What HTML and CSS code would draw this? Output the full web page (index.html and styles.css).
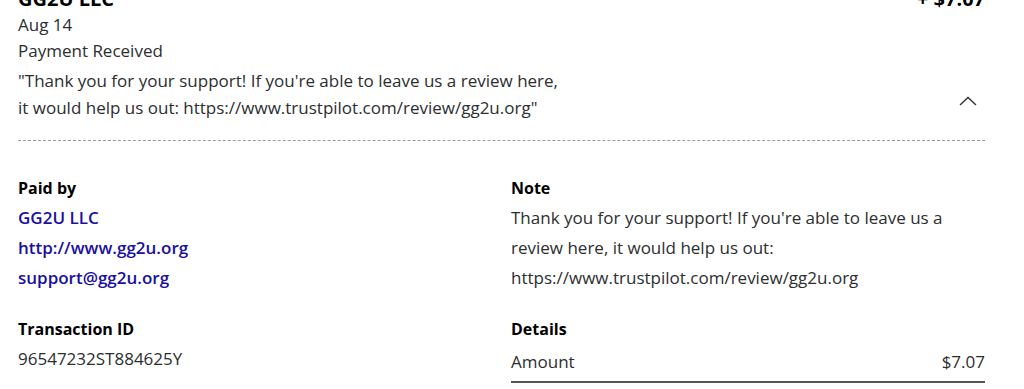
FILE: index.html
```html
<!DOCTYPE html>
<html lang="en">
<head>
    <meta charset="UTF-8">
    <meta name="viewport" content="width=device-width, initial-scale=1.0">
    <title>Activity details</title>
    <link rel="stylesheet" href="styles.css">
</head>
<body>
    <div class="activity">
        <div class="summary">
            <div class="summary-info">
                <div class="merchant">GG2U LLC</div>
                <div class="line">Aug 14</div>
                <div class="line">Payment Received</div>
                <div class="quote">"Thank you for your support! If you're able to leave us a review here, it would help us out: https://www.trustpilot.com/review/gg2u.org"</div>
            </div>
            <div class="summary-side">
                <div class="total">+ $7.07</div>
                <svg class="chevron" width="18" height="10" viewBox="0 0 18 10">
                    <path d="M1 9 L9 1.5 L17 9" fill="none" stroke="#2c2e2f" stroke-width="1.3"/>
                </svg>
            </div>
        </div>

        <div class="details">
            <div class="block">
                <h3>Paid by</h3>
                <a href="#">GG2U LLC</a>
                <a href="#">http://www.gg2u.org</a>
                <a href="#">support@gg2u.org</a>
            </div>
            <div class="block">
                <h3>Note</h3>
                <p>Thank you for your support! If you're able to leave us a review here, it would help us out: https://www.trustpilot.com/review/gg2u.org</p>
            </div>
            <div class="block">
                <h3>Transaction ID</h3>
                <p>96547232ST884625Y</p>
            </div>
            <div class="block">
                <h3>Details</h3>
                <div class="amount-row">
                    <span>Amount</span>
                    <span>$7.07</span>
                </div>
            </div>
        </div>
    </div>
</body>
</html>
```

FILE: styles.css
```css
body {
    margin: 0;
    background-color: #fff;
    color: #2c2e2f;
    font-family: "Open Sans", Arial, sans-serif;
    font-size: 17px;
}
.activity {
    width: 967px;
    padding-left: 18px;
    margin-top: -14px;
}
.summary {
    display: flex;
    justify-content: space-between;
    border-bottom: 1px dashed #9a9a9a;
    padding-bottom: 19px;
}
.merchant {
    font-size: 20px;
    font-weight: 700;
    line-height: 26px;
    color: #000;
}
.line {
    line-height: 26px;
}
.quote {
    width: 548px;
    line-height: 27px;
    margin-top: 3px;
}
.summary-side {
    display: flex;
    flex-direction: column;
    align-items: flex-end;
    justify-content: space-between;
}
.total {
    font-size: 20px;
    font-weight: 700;
    line-height: 26px;
    color: #000;
}
.chevron {
    margin-right: 8px;
    margin-bottom: 15px;
}
.details {
    display: grid;
    grid-template-columns: 493px 1fr;
    row-gap: 21px;
    padding-top: 32px;
}
.block h3 {
    margin: 0;
    font-size: 16px;
    font-weight: 700;
    line-height: 30px;
    color: #000;
}
.block a {
    display: block;
    color: #1a0fa0;
    font-weight: 600;
    text-decoration: none;
    line-height: 30px;
}
.block p {
    margin: 0;
    line-height: 30px;
}
.amount-row {
    display: flex;
    justify-content: space-between;
    line-height: 30px;
    padding-top: 3px;
    padding-bottom: 4px;
    border-bottom: 2px solid #545454;
}
```
